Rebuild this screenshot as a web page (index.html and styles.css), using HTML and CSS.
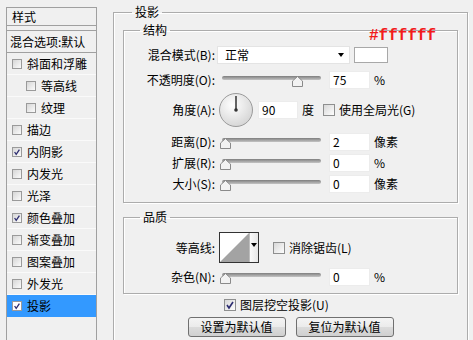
FILE: index.html
```html
<!DOCTYPE html>
<html lang="zh-CN">
<head>
  <meta charset="UTF-8">
  <title>图层样式 - 投影</title>
  <link rel="stylesheet" href="styles.css">
</head>
<body>
<div class="dialog">
  <aside class="side">
    <div class="side-head">样式</div>
    <div class="side-blend">混合选项:默认</div>
    <ul class="side-list">
      <li class="item"><span class="cb"></span>斜面和浮雕</li>
      <li class="item sub"><span class="cb"></span>等高线</li>
      <li class="item sub"><span class="cb"></span>纹理</li>
      <li class="item"><span class="cb"></span>描边</li>
      <li class="item"><span class="cb"><svg viewBox="0 0 10 10"><path d="M2 5l2 3 4-6" fill="none" stroke="#2c2c70" stroke-width="1.6"/></svg></span>内阴影</li>
      <li class="item"><span class="cb"></span>内发光</li>
      <li class="item"><span class="cb"></span>光泽</li>
      <li class="item"><span class="cb"><svg viewBox="0 0 10 10"><path d="M2 5l2 3 4-6" fill="none" stroke="#2c2c70" stroke-width="1.6"/></svg></span>颜色叠加</li>
      <li class="item"><span class="cb"></span>渐变叠加</li>
      <li class="item"><span class="cb"></span>图案叠加</li>
      <li class="item"><span class="cb"></span>外发光</li>
      <li class="item sel"><span class="cb"><svg viewBox="0 0 10 10"><path d="M2 5l2 3 4-6" fill="none" stroke="#2c2c70" stroke-width="1.6"/></svg></span>投影</li>
    </ul>
  </aside>

  <main class="main">
    <fieldset class="group outer">
      <legend>投影</legend>
      <span class="note">#ffffff</span>

      <fieldset class="group inner struct">
        <legend>结构</legend>
        <div class="row r1">
          <span class="lbl">混合模式(B):</span>
          <div class="select"><span>正常</span><i class="arrow"></i></div>
          <span class="swatch"></span>
        </div>
        <div class="row r2">
          <span class="lbl">不透明度(O):</span>
          <div class="slider"><div class="track"></div><svg class="thumb" style="left:72px" width="11" height="11" viewBox="0 0 11 11"><polygon points="5.5,0.5 10.5,5 10.5,10.5 0.5,10.5 0.5,5" fill="#f2f2f2" stroke="#8a8a8a"/></svg></div>
          <span class="num">75</span>
          <span class="unit">%</span>
        </div>
        <div class="row r3">
          <span class="lbl">角度(A):</span>
          <svg class="dial" width="34" height="34" viewBox="0 0 34 34">
            <defs><radialGradient id="dg" cx="40%" cy="35%" r="70%"><stop offset="0" stop-color="#ffffff"/><stop offset="1" stop-color="#d4d4d4"/></radialGradient></defs>
            <circle cx="17" cy="17" r="16.5" fill="url(#dg)" stroke="#9a9a9a"/>
            <line x1="17" y1="17" x2="17" y2="3" stroke="#333" stroke-width="1.5"/>
            <circle cx="17" cy="17" r="1.8" fill="#333"/>
          </svg>
          <span class="num angle">90</span>
          <span class="unit">度</span>
          <span class="chk global"><span class="box"></span>使用全局光(G)</span>
        </div>
        <div class="row r4">
          <span class="lbl">距离(D):</span>
          <div class="slider"><div class="track"></div><svg class="thumb" style="left:0px" width="11" height="11" viewBox="0 0 11 11"><polygon points="5.5,0.5 10.5,5 10.5,10.5 0.5,10.5 0.5,5" fill="#f2f2f2" stroke="#8a8a8a"/></svg></div>
          <span class="num">2</span>
          <span class="unit">像素</span>
        </div>
        <div class="row r5">
          <span class="lbl">扩展(R):</span>
          <div class="slider"><div class="track"></div><svg class="thumb" style="left:0px" width="11" height="11" viewBox="0 0 11 11"><polygon points="5.5,0.5 10.5,5 10.5,10.5 0.5,10.5 0.5,5" fill="#f2f2f2" stroke="#8a8a8a"/></svg></div>
          <span class="num">0</span>
          <span class="unit">%</span>
        </div>
        <div class="row r5">
          <span class="lbl">大小(S):</span>
          <div class="slider"><div class="track"></div><svg class="thumb" style="left:0px" width="11" height="11" viewBox="0 0 11 11"><polygon points="5.5,0.5 10.5,5 10.5,10.5 0.5,10.5 0.5,5" fill="#f2f2f2" stroke="#8a8a8a"/></svg></div>
          <span class="num">0</span>
          <span class="unit">像素</span>
        </div>
      </fieldset>

      <fieldset class="group inner quality">
        <legend>品质</legend>
        <div class="row q1">
          <span class="lbl">等高线:</span>
          <div class="contour">
            <svg class="curve" width="29" height="29" viewBox="0 0 29 29"><polygon points="0,29 29,0 29,29" fill="#a3a3a3"/></svg>
            <span class="drop"><i class="arrow"></i></span>
          </div>
          <span class="chk anti"><span class="box"></span>消除锯齿(L)</span>
        </div>
        <div class="row q2">
          <span class="lbl">杂色(N):</span>
          <div class="slider"><div class="track"></div><svg class="thumb" style="left:0px" width="11" height="11" viewBox="0 0 11 11"><polygon points="5.5,0.5 10.5,5 10.5,10.5 0.5,10.5 0.5,5" fill="#f2f2f2" stroke="#8a8a8a"/></svg></div>
          <span class="num">0</span>
          <span class="unit">%</span>
        </div>
      </fieldset>

      <span class="chk knock"><span class="box"><svg viewBox="0 0 10 10"><path d="M2 5l2 3 4-6" fill="none" stroke="#2c2c70" stroke-width="1.6"/></svg></span>图层挖空投影(U)</span>

      <div class="buttons">
        <button type="button">设置为默认值</button>
        <button type="button">复位为默认值</button>
      </div>
    </fieldset>
  </main>
</div>
</body>
</html>
```

FILE: styles.css
```css
* {
  box-sizing: border-box;
}
body {
  margin: 0;
  width: 473px;
  height: 340px;
  overflow: hidden;
  background: #f0f0f0;
  font: 12px/16px "Noto Sans CJK SC", "Noto Sans", sans-serif;
  color: #000;
}
.dialog {
  display: flex;
  align-items: flex-start;
  height: 340px;
}

/* left list */
.side {
  width: 91px;
  height: 333px;
  margin: 7px 0 0 6px;
  border-left: 1px solid #a0a0a0;
  border-right: 1px solid #a0a0a0;
  flex-shrink: 0;
}
.side-head {
  height: 19px;
  padding-left: 5px;
  line-height: 17px;
  border-top: 1px solid #a0a0a0;
  border-bottom: 1px solid #a0a0a0;
}
.side-blend {
  height: 23px;
  margin-top: 4px;
  padding-left: 3px;
  line-height: 21px;
  border-top: 1px solid #a0a0a0;
  border-bottom: 1px solid #a0a0a0;
  white-space: nowrap;
}
.side-list {
  list-style: none;
  margin: 0;
  padding: 0;
}
.item {
  display: flex;
  align-items: center;
  height: 22px;
  padding-left: 5px;
  border-bottom: 1px solid #fafafa;
}
.item.sub {
  padding-left: 19px;
}
.item.sel {
  background: #3399ff;
  border-bottom-color: #3399ff;
}
.cb {
  width: 10px;
  height: 10px;
  margin-right: 5px;
  border: 1px solid #9a9a9a;
  background: linear-gradient(135deg, #d6d6d6, #fbfbfb);
  display: flex;
}
.cb svg, .box svg {
  width: 100%;
  height: 100%;
}
.sel .cb {
  background: #fff;
}

/* right panel */
.main {
  margin: 4px 0 0 16px;
}
.group {
  margin: 0;
  min-width: 0;
  border: 1px solid #acacac;
  box-shadow: inset 1px 1px 0 #fff, 1px 1px 0 #fff;
}
.group legend {
  padding: 0 3px;
  line-height: 16px;
}
.outer {
  position: relative;
  width: 355px;
  height: 380px;
  padding: 2px 9px 0;
}
.outer > legend {
  margin-left: 9px;
}
.inner {
  width: 335px;
  padding: 8px 0 9px;
}
.inner > legend {
  margin-left: 16px;
}
.quality {
  margin-top: 6px;
  padding-top: 7px;
  padding-bottom: 7px;
}
.note {
  position: absolute;
  left: 255px;
  top: 8px;
  font: bold 16px/16px "Liberation Mono", monospace;
  color: #f21b1b;
}

.row {
  display: flex;
  align-items: center;
  height: 18px;
}
.lbl {
  width: 91px;
  text-align: right;
  white-space: nowrap;
}
.r2 { margin-top: 7px; }
.r3 { margin-top: 4px; height: 34px; }
.r4 { margin-top: 6px; }
.r5 { margin-top: 3px; }
.q1 { height: 31px; }
.q2 { margin-top: 5px; }

.select {
  width: 133px;
  height: 18px;
  margin-left: 2px;
  padding: 0 5px 0 7px;
  background: #fff;
  border: 1px solid #e4e4e4;
  display: flex;
  align-items: center;
  justify-content: space-between;
}
.arrow {
  width: 0;
  height: 0;
  border-top: 4px solid #000;
  border-left: 3.5px solid transparent;
  border-right: 3.5px solid transparent;
}
.swatch {
  width: 34px;
  height: 16px;
  margin-left: 4px;
  background: #fff;
  border: 1px solid #a8a8a8;
}

.slider {
  position: relative;
  width: 102px;
  height: 18px;
  margin-left: 5px;
}
.track {
  height: 4px;
  margin: 5px 1px 0 2px;
  border-radius: 2px;
  background: linear-gradient(#7e7e7e, #c4c4c4);
}
.thumb {
  position: absolute;
  top: 5px;
}

.num {
  width: 41px;
  height: 18px;
  margin-left: 7px;
  padding-left: 3px;
  background: #fff;
  border: 1px solid #ececec;
  line-height: 16px;
}
.unit {
  margin-left: 4px;
}
.dial {
  margin-left: 4px;
}
.num.angle {
  width: 40px;
  margin-left: 5px;
}

.chk {
  display: flex;
  align-items: center;
  white-space: nowrap;
}
.box {
  width: 12px;
  height: 12px;
  margin-right: 4px;
  border: 1px solid #8e8f8f;
  background: linear-gradient(135deg, #d8d8d8, #fdfdfd);
  display: flex;
}
.global {
  margin-left: 9px;
}
.anti {
  margin-left: 14px;
}
.knock {
  margin: 4px 0 0 101px;
  height: 14px;
}

.contour {
  display: flex;
  width: 40px;
  height: 31px;
  margin-left: 4px;
  border: 1px solid #333;
  background: #fff;
}
.curve {
  display: block;
}
.drop {
  flex: 1;
  display: flex;
  justify-content: center;
  padding-top: 10px;
  border-left: 1px solid #bdbdbd;
  background: linear-gradient(90deg, #fafafa, #e6e6e6);
}

.buttons {
  display: flex;
  justify-content: center;
  gap: 10px;
  margin-top: 5px;
}
button {
  width: 98px;
  height: 20px;
  padding: 0;
  font: 12px/16px "Noto Sans CJK SC", "Noto Sans", sans-serif;
  color: #000;
  border: 1px solid #707070;
  border-radius: 3px;
  background: linear-gradient(#f4f4f4, #ebebeb 50%, #dcdcdc 50%, #cfcfcf);
}
```
